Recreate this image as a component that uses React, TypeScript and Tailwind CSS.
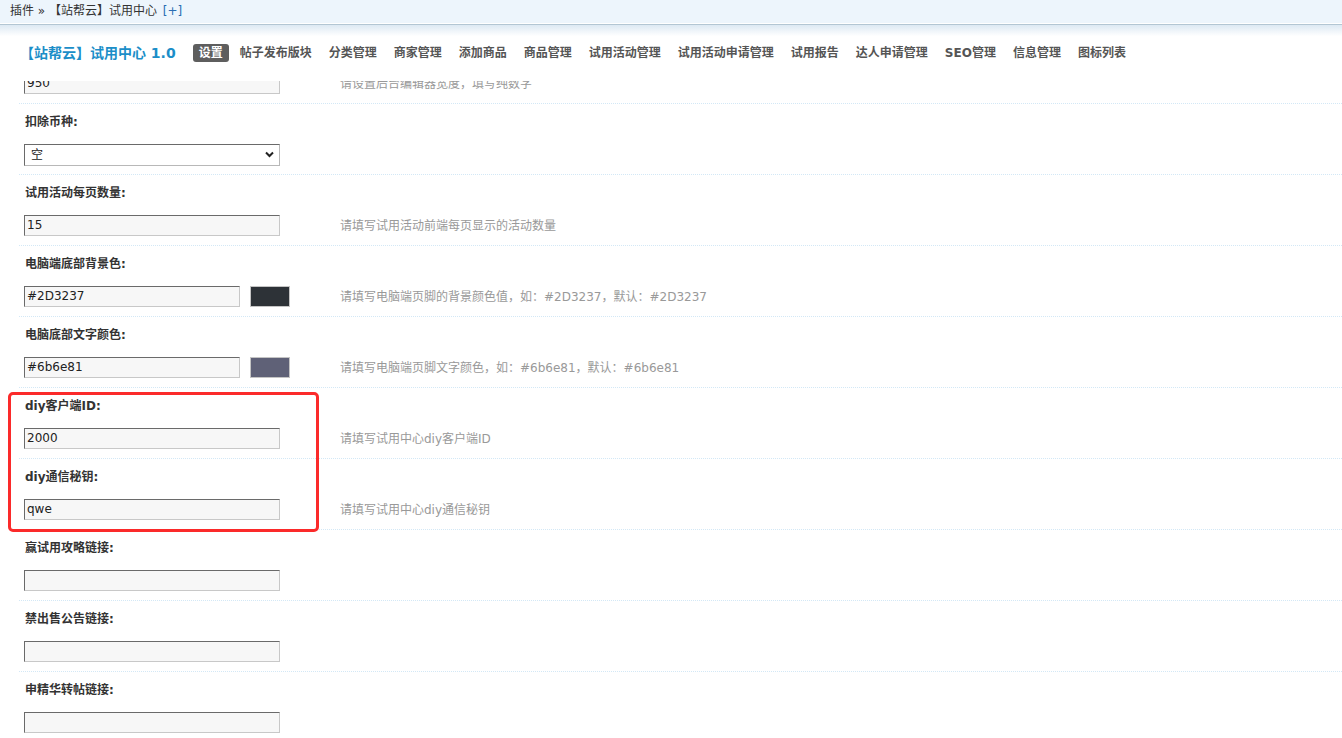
import React from "react";

const FONT = '"DejaVu Sans", "Noto Sans CJK SC", sans-serif';

type Row = {
  label: string;
  kind: "text" | "select" | "color";
  value?: string;
  color?: string;
  desc?: string;
};

const rows: Row[] = [
  { label: "扣除币种:", kind: "select", value: "空" },
  { label: "试用活动每页数量:", kind: "text", value: "15", desc: "请填写试用活动前端每页显示的活动数量" },
  {
    label: "电脑端底部背景色:",
    kind: "color",
    value: "#2D3237",
    color: "#2D3237",
    desc: "请填写电脑端页脚的背景颜色值，如：#2D3237，默认：#2D3237",
  },
  {
    label: "电脑底部文字颜色:",
    kind: "color",
    value: "#6b6e81",
    color: "#5f6177",
    desc: "请填写电脑端页脚文字颜色，如：#6b6e81，默认：#6b6e81",
  },
  { label: "diy客户端ID:", kind: "text", value: "2000", desc: "请填写试用中心diy客户端ID" },
  { label: "diy通信秘钥:", kind: "text", value: "qwe", desc: "请填写试用中心diy通信秘钥" },
  { label: "赢试用攻略链接:", kind: "text", value: "" },
  { label: "禁出售公告链接:", kind: "text", value: "" },
  { label: "申精华转帖链接:", kind: "text", value: "" },
];

const navItems = [
  "帖子发布版块",
  "分类管理",
  "商家管理",
  "添加商品",
  "商品管理",
  "试用活动管理",
  "试用活动申请管理",
  "试用报告",
  "达人申请管理",
  "SEO管理",
  "信息管理",
  "图标列表",
];

function TextBox({ value, width }: { value: string; width: string }) {
  return (
    <div
      className={`${width} h-[21px] border border-t-[#6a6a6a] border-l-[#6a6a6a] border-r-[#c8c8c8] border-b-[#c8c8c8] bg-[#f7f7f7] pl-[2px] text-[12px] leading-[19px] text-[#222]`}
    >
      {value}
    </div>
  );
}

function InputRow({ row }: { row: Row }) {
  return (
    <div className="flex h-[36px] items-start border-b border-dotted border-[#d3e8f6] pt-[5px]">
      <div className="flex w-[321px] shrink-0 items-center pl-[5px]">
        {row.kind === "text" && <TextBox value={row.value ?? ""} width="w-[256px]" />}
        {row.kind === "color" && (
          <>
            <TextBox value={row.value ?? ""} width="w-[216px]" />
            <div
              className="ml-[10px] h-[21px] w-[40px] border border-[#c4c4c4]"
              style={{ backgroundColor: row.color }}
            />
          </>
        )}
        {row.kind === "select" && (
          <div className="relative h-[22px] w-[256px] border border-t-[#6a6a6a] border-l-[#6a6a6a] border-r-[#b8b8b8] border-b-[#b8b8b8] bg-white pl-[6px] text-[12px] leading-[20px] text-[#222]">
            {row.value}
            <svg
              className="absolute right-[5px] top-[6px]"
              width="9"
              height="7"
              viewBox="0 0 9 7"
            >
              <path d="M1 1.5 L4.5 5 L8 1.5" fill="none" stroke="#222" strokeWidth="2" />
            </svg>
          </div>
        )}
      </div>
      {row.desc && (
        <div className="flex h-[21px] items-center text-[12px] text-[#999]">{row.desc}</div>
      )}
    </div>
  );
}

export default function App() {
  return (
    <div
      className="h-[738px] w-[1342px] overflow-hidden bg-white text-[#333]"
      style={{ fontFamily: FONT }}
    >
      {/* breadcrumb bar */}
      <div className="h-[23px] bg-[#edf5fc] pl-[10px] text-[12px] leading-[22px] text-[#333]">
        插件 » 【站帮云】试用中心 <span className="ml-[2px] text-[#2a6db3]">[+]</span>
      </div>
      <div className="h-[1px] bg-white" />
      <div className="h-[1px] bg-[#b3c6d3]" />
      {/* header */}
      <div className="flex h-[56px] items-start bg-gradient-to-b from-[#dde9f3] via-white via-[20%] to-white pl-[20px] pt-[19px]">
        <div className="mr-[17px] text-[14px] font-bold leading-[18px] text-[#1b8ec8]">
          【站帮云】试用中心 1.0
        </div>
        <div className="flex items-center gap-[5px]">
          <div className="h-[18px] rounded-[3px] bg-[#5e5e5e] px-[6px] text-[12px] font-bold leading-[18px] text-white">
            设置
          </div>
          {navItems.map((n) => (
            <div key={n} className="h-[18px] px-[6px] text-[12px] font-bold leading-[18px] text-[#555]">
              {n}
            </div>
          ))}
        </div>
      </div>

      {/* content */}
      <div className="relative pl-[19px]">
        <div className="h-[23px] overflow-hidden">
          <div className="mt-[-13px]">
            <InputRow row={{ label: "", kind: "text", value: "950", desc: "请设置后台编辑器宽度，填写纯数字" }} />
          </div>
        </div>
        {rows.map((r) => (
          <div key={r.label}>
            <div className="flex h-[35px] items-center pl-[6px] text-[12px] font-bold text-[#333]">
              {r.label}
            </div>
            <InputRow row={r} />
          </div>
        ))}
        <div className="pointer-events-none absolute left-[8px] top-[311px] h-[140px] w-[311px] rounded-[5px] border-[3px] border-[#fb2a2a]" />
      </div>
    </div>
  );
}
